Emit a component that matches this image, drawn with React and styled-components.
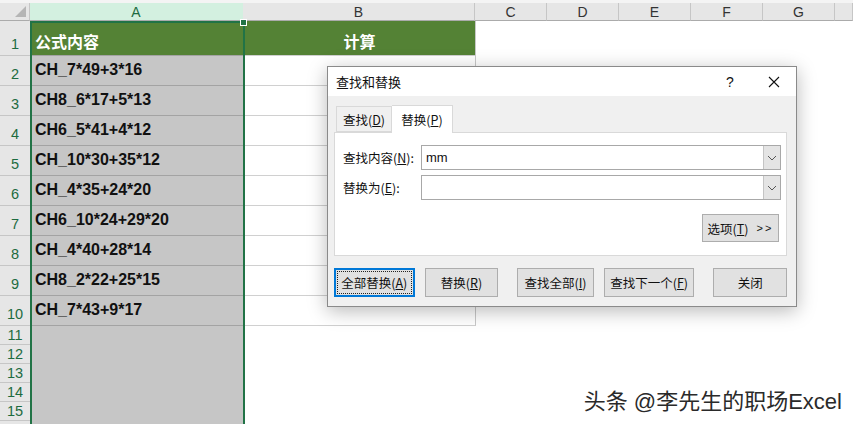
import React from 'react'
import styled, { createGlobalStyle } from 'styled-components'

const GlobalStyle = createGlobalStyle`
  html, body { margin: 0; padding: 0; background: #fff; overflow: hidden; }
  body { font-family: "Liberation Sans", "Noto Sans CJK SC", sans-serif; }
`

const CJK = `"Noto Sans CJK SC", "Liberation Sans", sans-serif`

const Page = styled.div`
  position: relative;
  width: 853px;
  height: 424px;
  overflow: hidden;
  background: #fff;
`

const Sheet = styled.div`
  display: flex;
  flex-direction: column;
`

const HeaderRow = styled.div`
  display: flex;
  height: 18px;
  border-top: 3px solid #f4f4f4;
  background: #e6e6e6;
`

const Corner = styled.div`
  position: relative;
  width: 30px;
  border-right: 1px solid #c6c6c6;
  border-bottom: 1px solid #ababab;
  box-sizing: border-box;
  &::after {
    content: '';
    position: absolute;
    right: 3px;
    bottom: 3px;
    border-left: 11px solid transparent;
    border-bottom: 11px solid #b5b5b5;
  }
`

const ColHead = styled.div`
  width: ${p => p.$w}px;
  flex: ${p => (p.$fill ? 1 : 'none')};
  box-sizing: border-box;
  display: flex;
  align-items: center;
  justify-content: center;
  font-size: 14px;
  color: ${p => (p.$sel ? '#1d6b3f' : '#333')};
  background: ${p => (p.$sel ? '#d3f0e0' : '#e6e6e6')};
  border-right: 1px solid ${p => (p.$sel ? '#d3f0e0' : '#c6c6c6')};
  border-bottom: 1px solid #ababab;
`

const Row = styled.div`
  display: flex;
  height: ${p => p.$h}px;
`

const RowHead = styled.div`
  width: 31px;
  box-sizing: border-box;
  background: #e6e6e6;
  border-right: 1px solid #c6c6c6;
  border-bottom: 1px solid #c6c6c6;
  color: #1d6b3f;
  font-size: 14.5px;
  display: flex;
  align-items: flex-end;
  justify-content: center;
  padding-bottom: ${p => (p.$tall ? 2 : 0)}px;
  line-height: 17px;
`

const CellA = styled.div`
  width: 213px;
  box-sizing: border-box;
  background: ${p => (p.$head ? '#548235' : '#c6c6c6')};
  border-bottom: ${p => (p.$line ? '1px solid #a3a3a3' : 'none')};
  color: ${p => (p.$head ? '#fff' : '#111')};
  font-weight: bold;
  font-size: 16px;
  font-family: ${p => (p.$head ? CJK : `"Liberation Sans", "Noto Sans CJK SC", sans-serif`)};
  display: flex;
  align-items: flex-end;
  padding: 0 0 ${p => (p.$head ? 4 : 5)}px 4px;
  line-height: 20px;
`

const CellB = styled.div`
  width: 232px;
  box-sizing: border-box;
  background: ${p => (p.$head ? '#548235' : '#fff')};
  border-bottom: ${p => (p.$line ? '1px solid #d0d0d0' : 'none')};
  border-right: ${p => (p.$line ? '1px solid #c8c8c8' : 'none')};
  color: #fff;
  font-weight: bold;
  font-size: 16px;
  font-family: ${CJK};
  display: flex;
  align-items: flex-end;
  justify-content: center;
  padding-bottom: 4px;
  line-height: 20px;
`

const Selection = styled.div`
  position: absolute;
  left: 30px;
  top: 21px;
  width: 215px;
  bottom: -4px;
  border: 2px solid #217346;
  box-sizing: border-box;
  pointer-events: none;
  &::after {
    content: '';
    position: absolute;
    right: -4px;
    top: -4px;
    width: 5px;
    height: 5px;
    background: #217346;
    border: 1px solid #fff;
  }
`

/* ---- dialog ---- */

const Dialog = styled.div`
  position: absolute;
  left: 327px;
  top: 66px;
  width: 470px;
  height: 241px;
  box-sizing: border-box;
  border: 1px solid #8a8a8a;
  background: #f0f0f0;
  box-shadow: 0 4px 18px rgba(0, 0, 0, 0.28);
  font-family: ${CJK};
  font-size: 12.5px;
  color: #111;
  display: flex;
  flex-direction: column;
`

const TitleBar = styled.div`
  height: 29px;
  background: #fff;
  display: flex;
  align-items: center;
  padding-left: 8px;
  font-size: 13px;
`

const Title = styled.div`
  flex: 1;
`

const TitleBtn = styled.div`
  width: 44px;
  height: 29px;
  display: flex;
  align-items: center;
  justify-content: center;
  font-family: "Liberation Sans", sans-serif;
  font-size: 14px;
`

const Body = styled.div`
  flex: 1;
  display: flex;
  flex-direction: column;
  padding: 9px 9px 9px 6px;
`

const Tabs = styled.div`
  display: flex;
  padding-left: 2px;
  height: 27px;
  align-items: flex-end;
`

const Tab = styled.div`
  box-sizing: border-box;
  width: ${p => p.$w}px;
  height: ${p => (p.$active ? 28 : 26)}px;
  margin-bottom: ${p => (p.$active ? -1 : 0)}px;
  background: ${p => (p.$active ? '#fff' : '#f0f0f0')};
  border: 1px solid #d9d9d9;
  border-bottom: ${p => (p.$active ? 'none' : '1px solid #d9d9d9')};
  border-left: ${p => (p.$active ? 'none' : '1px solid #d9d9d9')};
  display: flex;
  align-items: center;
  justify-content: center;
  font-size: 12.5px;
  position: relative;
  z-index: ${p => (p.$active ? 2 : 1)};
`

const Panel = styled.div`
  height: 124px;
  box-sizing: border-box;
  background: #fff;
  border: 1px solid #d9d9d9;
  padding: 12px 5px 0 8px;
  display: flex;
  flex-direction: column;
`

const FieldRow = styled.div`
  display: flex;
  align-items: center;
  height: 25px;
  margin-bottom: 5px;
`

const Label = styled.div`
  width: 78px;
  font-size: 12.5px;
`

const Combo = styled.div`
  flex: 1;
  height: 25px;
  box-sizing: border-box;
  border: 1px solid #a8a8a8;
  display: flex;
  background: #fff;
`

const ComboText = styled.div`
  flex: 1;
  padding-left: 4px;
  display: flex;
  align-items: center;
  font-family: "Liberation Sans", sans-serif;
  font-size: 13px;
`

const ComboArrow = styled.div`
  width: 16px;
  background: #e4e4e4;
  border-left: 1px solid #c4c4c4;
  display: flex;
  align-items: center;
  justify-content: center;
`

const OptionsRow = styled.div`
  display: flex;
  justify-content: flex-end;
  margin-top: 9px;
  padding-right: 2px;
`

const Button = styled.div`
  box-sizing: border-box;
  width: ${p => p.$w}px;
  height: ${p => p.$h || 29}px;
  margin-left: ${p => p.$gap || 0}px;
  background: #e1e1e1;
  border: ${p => (p.$focus ? '2px solid #0078d7' : '1px solid #adadad')};
  display: flex;
  align-items: center;
  justify-content: center;
  font-size: 12.5px;
  position: relative;
  &::after {
    content: ${p => (p.$focus ? "''" : 'none')};
    position: absolute;
    inset: 1px;
    border: 1px dotted #222;
  }
`

const Arrows = styled.span`
  margin-left: 8px;
  font-family: "Liberation Sans", sans-serif;
  font-size: 11px;
  letter-spacing: 2px;
`

const ButtonRow = styled.div`
  display: flex;
  margin-top: 12px;
`

const Watermark = styled.div`
  position: absolute;
  right: 11px;
  bottom: 9px;
  font-family: "Liberation Sans", "Noto Sans CJK SC", sans-serif;
  font-size: 22px;
  color: #2a2a2a;
  text-shadow: 0 0 2px #fff, 0 0 2px #fff, 1px 1px 1px rgba(255, 255, 255, 0.9);
`

const Chevron = () => (
  <svg width="10" height="6" viewBox="0 0 10 6">
    <path d="M1 1 L5 5 L9 1" fill="none" stroke="#555" strokeWidth="1" />
  </svg>
)

const CloseIcon = () => (
  <svg width="12" height="12" viewBox="0 0 12 12">
    <path d="M1 1 L11 11 M11 1 L1 11" stroke="#111" strokeWidth="1.1" />
  </svg>
)

const rows = [
  { n: 1, h: 35, a: '公式内容', b: '计算', head: true },
  { n: 2, h: 30, a: 'CH_7*49+3*16' },
  { n: 3, h: 30, a: 'CH8_6*17+5*13' },
  { n: 4, h: 30, a: 'CH6_5*41+4*12' },
  { n: 5, h: 30, a: 'CH_10*30+35*12' },
  { n: 6, h: 30, a: 'CH_4*35+24*20' },
  { n: 7, h: 30, a: 'CH6_10*24+29*20' },
  { n: 8, h: 30, a: 'CH_4*40+28*14' },
  { n: 9, h: 30, a: 'CH8_2*22+25*15' },
  { n: 10, h: 30, a: 'CH_7*43+9*17' },
  { n: 11, h: 19, empty: true },
  { n: 12, h: 19, empty: true },
  { n: 13, h: 19, empty: true },
  { n: 14, h: 19, empty: true },
  { n: 15, h: 19, empty: true },
  { n: '', h: 19, empty: true },
]

const cols = ['C', 'D', 'E', 'F', 'G']

const App = () => {
  return (
    <Page>
      <GlobalStyle />
      <Sheet>
        <HeaderRow>
          <Corner />
          <ColHead $w={213} $sel>A</ColHead>
          <ColHead $w={232}>B</ColHead>
          {cols.map(c => (
            <ColHead key={c} $w={72}>{c}</ColHead>
          ))}
          <ColHead $fill />
        </HeaderRow>
        {rows.map((r, i) => (
          <Row key={i} $h={r.h}>
            <RowHead $tall={!r.empty}>{r.n}</RowHead>
            <CellA $head={r.head} $line={!r.empty}>{r.a}</CellA>
            <CellB $head={r.head} $line={!r.empty}>{r.b}</CellB>
          </Row>
        ))}
      </Sheet>
      <Selection />

      <Dialog>
        <TitleBar>
          <Title>查找和替换</Title>
          <TitleBtn>?</TitleBtn>
          <TitleBtn><CloseIcon /></TitleBtn>
        </TitleBar>
        <Body>
          <Tabs>
            <Tab $w={56}>查找(<u>D</u>)</Tab>
            <Tab $w={61} $active>替换(<u>P</u>)</Tab>
          </Tabs>
          <Panel>
            <FieldRow>
              <Label>查找内容(<u>N</u>):</Label>
              <Combo>
                <ComboText>mm</ComboText>
                <ComboArrow><Chevron /></ComboArrow>
              </Combo>
            </FieldRow>
            <FieldRow>
              <Label>替换为(<u>E</u>):</Label>
              <Combo>
                <ComboText />
                <ComboArrow><Chevron /></ComboArrow>
              </Combo>
            </FieldRow>
            <OptionsRow>
              <Button $w={77} $h={28}>选项(<u>T</u>)<Arrows>&gt;&gt;</Arrows></Button>
            </OptionsRow>
          </Panel>
          <ButtonRow>
            <Button $w={81} $focus>全部替换(<u>A</u>)</Button>
            <Button $w={74} $gap={10}>替换(<u>R</u>)</Button>
            <Button $w={77} $gap={19}>查找全部(<u>I</u>)</Button>
            <Button $w={91} $gap={10}>查找下一个(<u>F</u>)</Button>
            <Button $w={74} $gap={19}>关闭</Button>
          </ButtonRow>
        </Body>
      </Dialog>

      <Watermark>头条 @李先生的职场Excel</Watermark>
    </Page>
  )
}

export default App
